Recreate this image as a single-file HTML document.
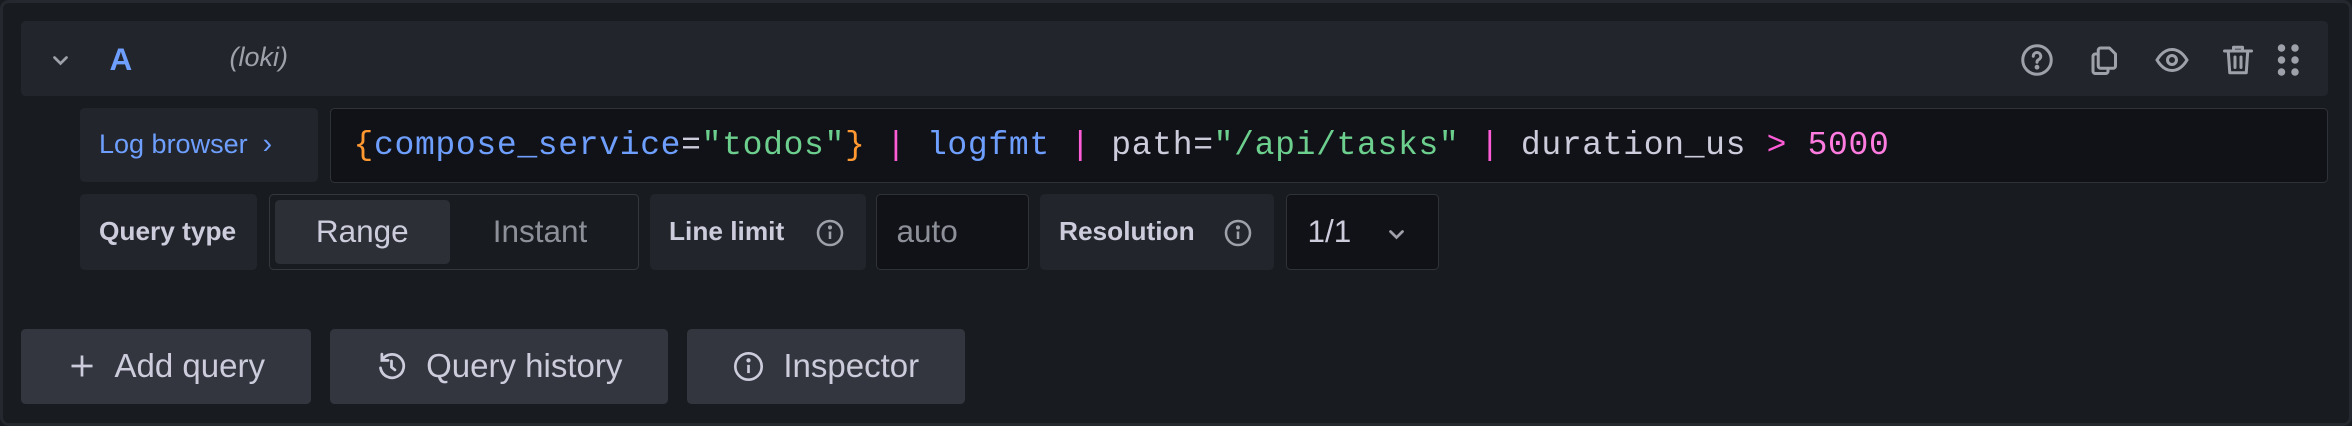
<!DOCTYPE html>
<html><head><meta charset="utf-8"><style>
html,body{margin:0;padding:0;background:#181b1f;}
body{width:1568px;height:284px;zoom:1.5;overflow:hidden;font-family:"Liberation Sans",sans-serif;position:relative;}
.frame{position:absolute;left:0;top:0;width:1564px;height:280px;border:2px solid #25282e;border-radius:6px;background:#181b1f;}
.abs{position:absolute;box-sizing:border-box;}
.hdr{left:14px;top:14px;width:1538px;height:50px;background:#22252b;border-radius:3px;}
.lbl{background:#22252b;border-radius:3px;color:#ccccdc;font-size:17.5px;font-weight:bold;display:flex;align-items:center;padding-left:13px;}
.inp{background:#111217;border:1px solid #2f3238;border-radius:3px;}
.btn{background:#33363e;border-radius:3px;color:#ccccdc;font-size:22px;display:flex;align-items:center;justify-content:center;gap:12px;top:219px;height:50px;}
.code{font-family:"Liberation Mono",monospace;font-size:22px;letter-spacing:0.45px;color:#ccccdc;display:flex;align-items:center;padding-left:15px;}
.code>span{white-space:pre;}
svg{display:block}
</style></head><body>
<div class="frame"></div>
<div class="abs hdr"></div>
<svg class="abs" style="left:33px;top:33px" width="14" height="14" viewBox="0 0 14 14"><path d="M3 5l4 4 4-4" fill="none" stroke="#9fa1aa" stroke-width="1.8" stroke-linecap="round"/></svg>
<div class="abs" style="left:73px;top:27px;color:#6e9fff;font-size:21px;font-weight:bold">A</div>
<div class="abs" style="left:153px;top:28px;color:#9fa1aa;font-size:18px;font-style:italic">(loki)</div>
<svg class="abs" style="left:1346px;top:28px" width="24" height="24" viewBox="0 0 24 24" fill="none" stroke="#9fa1aa" stroke-width="2"><circle cx="12" cy="12" r="9.5"/><path d="M9.5 9.5a2.5 2.5 0 1 1 3.5 2.3c-.7.4-1 .9-1 1.7" stroke-linecap="round"/><circle cx="12" cy="16.8" r=".6" fill="#9fa1aa"/></svg>
<svg class="abs" style="left:1391px;top:28px" width="24" height="24" viewBox="0 0 24 24" fill="none" stroke="#9fa1aa" stroke-width="2" stroke-linejoin="round"><path d="M9 4h6l4 4v8a1.5 1.5 0 0 1-1.5 1.5H9A1.5 1.5 0 0 1 7.5 16V5.5A1.5 1.5 0 0 1 9 4z"/><path d="M7.5 8H5.5A1.5 1.5 0 0 0 4 9.5v10A1.5 1.5 0 0 0 5.5 21h7a1.5 1.5 0 0 0 1.5-1.5v-2"/></svg>
<svg class="abs" style="left:1436px;top:28px" width="24" height="24" viewBox="0 0 24 24" fill="none" stroke="#9fa1aa" stroke-width="2"><path d="M2 12c3-5 6.5-7 10-7s7 2 10 7c-3 5-6.5 7-10 7s-7-2-10-7z"/><circle cx="12" cy="12" r="3"/></svg>
<svg class="abs" style="left:1480px;top:28px" width="24" height="24" viewBox="0 0 24 24" fill="none" stroke="#9fa1aa" stroke-width="2" stroke-linecap="round" stroke-linejoin="round"><path d="M3 6h18M9 6V3.5h6V6M5.5 6l1 14.5h11L18.5 6M10 10v7M14 10v7"/></svg>
<svg class="abs" style="left:1516px;top:28px" width="20" height="24" viewBox="0 0 20 24" fill="#9fa1aa"><circle cx="5" cy="4" r="2.5"/><circle cx="14" cy="4" r="2.5"/><circle cx="5" cy="12" r="2.5"/><circle cx="14" cy="12" r="2.5"/><circle cx="5" cy="20" r="2.5"/><circle cx="14" cy="20" r="2.5"/></svg>

<div class="abs lbl" style="left:53px;top:72px;width:159px;height:49px;color:#6e9fff;font-weight:normal;font-size:18px;">Log browser&nbsp;&nbsp;<span style="font-size:19px">›</span></div>
<div class="abs inp code" style="left:220px;top:72px;width:1332px;height:50px;"><span><span style="color:#ff9830">{</span><span style="color:#6e9fff">compose_service</span>=<span style="color:#6ccf8e">"todos"</span><span style="color:#ff9830">}</span> <span style="color:#ff5cd8">|</span> <span style="color:#6e9fff">logfmt</span> <span style="color:#ff5cd8">|</span> path=<span style="color:#6ccf8e">"/api/tasks"</span> <span style="color:#ff5cd8">|</span> duration_us <span style="color:#ff5cd8">&gt;</span> <span style="color:#ff7be0">5000</span></span></div>

<div class="abs lbl" style="left:53px;top:129px;width:118px;height:51px;">Query type</div>
<div class="abs" style="left:179px;top:129px;width:247px;height:51px;border:1px solid #34373d;border-radius:3px;background:#181b1f"></div>
<div class="abs" style="left:183px;top:133px;width:117px;height:43px;background:#2c2f35;border-radius:3px;color:#ccccdc;font-size:21px;display:flex;align-items:center;justify-content:center">Range</div>
<div class="abs" style="left:300px;top:133px;width:120px;height:43px;color:#8e9099;font-size:21px;display:flex;align-items:center;justify-content:center">Instant</div>
<div class="abs lbl" style="left:433px;top:129px;width:144px;height:51px;">Line limit</div>
<svg class="abs" style="left:543px;top:145px" width="20" height="20" viewBox="0 0 20 20" fill="none" stroke="#9fa1aa" stroke-width="1.7"><circle cx="10" cy="10" r="8"/><path d="M10 9v5"/><circle cx="10" cy="6.3" r=".5" fill="#9fa1aa"/></svg>
<div class="abs inp" style="left:584px;top:129px;width:102px;height:51px;color:#8e9099;font-size:21px;display:flex;align-items:center;padding-left:13px">auto</div>
<div class="abs lbl" style="left:693px;top:129px;width:156px;height:51px;">Resolution</div>
<svg class="abs" style="left:815px;top:145px" width="20" height="20" viewBox="0 0 20 20" fill="none" stroke="#9fa1aa" stroke-width="1.7"><circle cx="10" cy="10" r="8"/><path d="M10 9v5"/><circle cx="10" cy="6.3" r=".5" fill="#9fa1aa"/></svg>
<div class="abs inp" style="left:857px;top:129px;width:102px;height:51px;color:#ccccdc;font-size:21px;display:flex;align-items:center;padding-left:14px">1/1</div>
<svg class="abs" style="left:924px;top:149px" width="14" height="14" viewBox="0 0 14 14"><path d="M3 5l4 4 4-4" fill="none" stroke="#9fa1aa" stroke-width="1.8" stroke-linecap="round"/></svg>

<div class="abs btn" style="left:14px;width:193px;"><svg width="20" height="20" viewBox="0 0 20 20"><path d="M10 3v14M3 10h14" stroke="#ccccdc" stroke-width="1.8"/></svg>Add query</div>
<div class="abs btn" style="left:220px;width:225px;"><svg width="22" height="22" viewBox="0 0 24 24" fill="none" stroke="#ccccdc" stroke-width="2" stroke-linecap="round"><path d="M5 7.5A8.5 8.5 0 1 1 4 13"/><path d="M5 3v4.5h4.5"/><path d="M12 8v4.5l2.5 2"/></svg>Query history</div>
<div class="abs btn" style="left:458px;width:185px;"><svg width="22" height="22" viewBox="0 0 20 20" fill="none" stroke="#ccccdc" stroke-width="1.6"><circle cx="10" cy="10" r="8"/><path d="M10 9v5"/><circle cx="10" cy="6.3" r=".5" fill="#ccccdc"/></svg>Inspector</div>
</body></html>
